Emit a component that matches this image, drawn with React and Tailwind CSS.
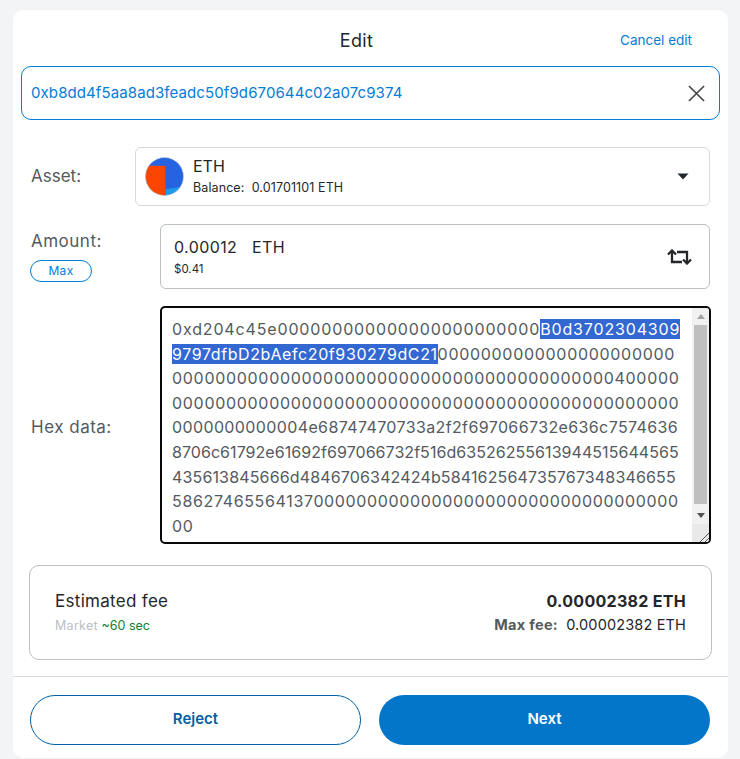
const FONT = "font-['Inter','Noto_Sans',sans-serif]"

function Avatar() {
  return (
    <svg width="39" height="39" viewBox="0 0 40 40" className="shrink-0">
      <defs>
        <clipPath id="av">
          <circle cx="20" cy="20" r="19.5" />
        </clipPath>
      </defs>
      <g clipPath="url(#av)">
        <rect width="40" height="40" fill="#2563e0" />
        <path d="M21 33 L40 30 V40 H21 Z" fill="#1d9be8" />
        <rect x="0" y="9" width="21" height="31" fill="#fb4500" />
      </g>
      <circle cx="20" cy="20" r="19.5" fill="none" stroke="#d6d9dc" strokeWidth="0.6" />
    </svg>
  )
}

function SwapIcon() {
  return (
    <svg width="25" height="16" viewBox="0 0 25 16" fill="none" stroke="#24272a" strokeWidth="2.3">
      <path d="M1 5.5 L5 1.5 L9 5.5" />
      <path d="M5 3 V13 H15" />
      <path d="M24 10.5 L20 14.5 L16 10.5" />
      <path d="M20 13 V3 H10" />
    </svg>
  )
}

// tracked per line, the zeros in the original font run wider than Inter's
const hexLines = [
  { text: '00000000000000000000000000000000000000000400000', cls: 'tracking-[0.7px]' },
  { text: '00000000000000000000000000000000000000000000000', cls: 'tracking-[0.7px]' },
  { text: '0000000000004e68747470733a2f2f697066732e636c7574636', cls: 'tracking-[0.38px]' },
  { text: '8706c61792e61692f697066732f516d63526255613944515644565', cls: 'tracking-[0.05px]' },
  { text: '435613845666d4846706342424b584162564735767348346655', cls: 'tracking-[0.15px]' },
  { text: '586274655641370000000000000000000000000000000000', cls: 'tracking-[0.65px]' },
  { text: '00', cls: 'tracking-[0.7px]' },
]

function Scrollbar() {
  return (
    <div className="w-[17px] shrink-0 flex flex-col bg-[#f1f1f1]">
      <div className="h-[17px] flex items-center justify-center">
        <svg width="8" height="5" viewBox="0 0 8 5"><path d="M0 5 L4 0 L8 5 Z" fill="#a3a3a3" /></svg>
      </div>
      <div className="h-[179px] mx-[2px] bg-[#bfbfbf]" />
      <div className="h-[17px] mt-[3px] flex items-center justify-center">
        <svg width="8" height="5" viewBox="0 0 8 5"><path d="M0 0 L4 5 L8 0 Z" fill="#505050" /></svg>
      </div>
      <div className="flex-1 flex items-end justify-end bg-[#e9e9e9]">
        <svg width="12" height="12" viewBox="0 0 12 12" stroke="#555" strokeWidth="1">
          <path d="M3 12 L12 3 M8 12 L12 8" />
        </svg>
      </div>
    </div>
  )
}

export default function App() {
  return (
    <div className={`${FONT} w-[740px] h-[759px] overflow-hidden bg-[#f2f4f6] pl-[13px] pt-[10px]`}>
      <div className="w-[715px] h-[748px] bg-white rounded-[10px] flex flex-col">
        {/* header */}
        <div className="h-[56px] shrink-0 flex items-center justify-center pr-[28px] relative">
          <h1 className="text-[18px] tracking-[0.3px] leading-none text-[#24272a] pt-[5px]">Edit</h1>
          <button className="absolute right-[36px] top-[22px] text-[13.5px] leading-[16px] text-[#037dd6]">Cancel edit</button>
        </div>

        {/* address */}
        <div className="mx-[8px] h-[54px] shrink-0 border border-[#037dd6] rounded-[10px] flex items-center justify-between pl-[9px] pr-[14px]">
          <span className="text-[15px] tracking-[0.1px] text-[#037dd6]">0xb8dd4f5aa8ad3feadc50f9d670644c02a07c9374</span>
          <svg width="17" height="17" viewBox="0 0 18 18" stroke="#454545" strokeWidth="1.7">
            <path d="M1 1 L17 17 M17 1 L1 17" />
          </svg>
        </div>

        {/* asset */}
        <div className="mt-[27px] pl-[18px] pr-[18px] flex items-center">
          <span className="w-[104px] text-[17px] leading-[20px] pb-[2px] text-[#535a61]">Asset:</span>
          <div className="flex-1 h-[59px] border border-[#d6d9dc] rounded-[6px] flex items-center pl-[9px] pr-[20px]">
            <Avatar />
            <div className="ml-[9px] flex-1 pb-[1px]">
              <div className="text-[16px] leading-[20px] text-[#24272a]">ETH</div>
              <div className="text-[12.5px] tracking-[0.1px] leading-[16px] mt-[4px] text-[#24272a]">Balance:&nbsp; 0.01701101 ETH</div>
            </div>
            <svg width="12" height="7" viewBox="0 0 12 7"><path d="M0.5 0.5 H11.5 L6 6.5 Z" fill="#24272a" /></svg>
          </div>
        </div>

        {/* amount */}
        <div className="mt-[18px] pl-[18px] pr-[18px] flex items-start">
          <div className="w-[129px] pt-[7px]">
            <div className="text-[17px] tracking-[0.5px] leading-[20px] text-[#535a61]">Amount:</div>
            <button className="mt-[9px] -ml-[1px] w-[62px] h-[22px] border border-[#037dd6] rounded-full text-[12px] tracking-[0.3px] leading-none text-[#037dd6]">Max</button>
          </div>
          <div className="flex-1 h-[65px] border border-[#bbc0c5] rounded-[6px] flex items-center justify-between pl-[13px] pr-[17px]">
            <div className="pb-[1px]">
              <div className="text-[16px] tracking-[0.4px] leading-[20px] text-[#24272a] whitespace-pre">0.00012   ETH</div>
              <div className="text-[11.5px] leading-[14px] mt-[5px] text-[#24272a]">$0.41</div>
            </div>
            <SwapIcon />
          </div>
        </div>

        {/* hex data */}
        <div className="mt-[17px] pl-[18px] pr-[17px] flex items-center">
          <span className="w-[129px] text-[17px] tracking-[0.5px] leading-[20px] pt-[3px] text-[#535a61]">Hex data:</span>
          <div className="flex-1 h-[238px] border-2 border-[#0a0a0a] rounded-[5px] overflow-hidden flex">
            <div className="flex-1 pl-[10px] pt-[9px] text-[16px] leading-[24.6px] text-[#535a61] whitespace-nowrap overflow-hidden">
              <div className="tracking-[0.85px]">
                0xd204c45e000000000000000000000000
                <span className="bg-[#3367d1] text-white">B0d3702304309</span>
              </div>
              <div className="tracking-[0.7px]">
                <span className="bg-[#3367d1] text-white tracking-[0.6px]">9797dfbD2bAefc20f930279dC21</span>
                0000000000000000000000
              </div>
              {hexLines.map((l, i) => (
                <div key={i} className={l.cls}>{l.text}</div>
              ))}
            </div>
            <Scrollbar />
          </div>
        </div>

        {/* fee */}
        <div className="mt-[21px] mx-[16px] h-[95px] shrink-0 border border-[#bbc0c5] rounded-[10px] flex justify-between pl-[25px] pr-[25px] pt-[25px]">
          <div>
            <div className="text-[17px] tracking-[0.3px] leading-[20px] text-[#24272a]">Estimated fee</div>
            <div className="text-[12.5px] leading-[14px] mt-[8px]">
              <span className="text-[#bbc0c5] tracking-[0.3px]">Market</span> <span className="text-[#118030]">~60 sec</span>
            </div>
          </div>
          <div className="text-right">
            <div className="text-[16px] tracking-[0.3px] leading-[20px] font-bold text-[#24272a]">0.00002382 ETH</div>
            <div className="text-[14.5px] leading-[18px] mt-[5px] text-[#24272a]">
              <span className="font-bold tracking-[0.3px] text-[#535a61]">Max fee:</span>&nbsp; <span className="tracking-[0.15px]">0.00002382 ETH</span>
            </div>
          </div>
        </div>

        {/* footer */}
        <div className="mt-[16px] border-t border-[#d6d9dc] flex gap-[18px] pl-[17px] pr-[18px] pt-[18px]">
          <button className="w-[331px] h-[50px] pb-[2px] border border-[#0260a4] rounded-full text-[15px] font-semibold text-[#0260a4]">Reject</button>
          <button className="w-[331px] h-[50px] pb-[2px] bg-[#0376c9] rounded-full text-[15px] font-semibold text-white">Next</button>
        </div>
      </div>
    </div>
  )
}
